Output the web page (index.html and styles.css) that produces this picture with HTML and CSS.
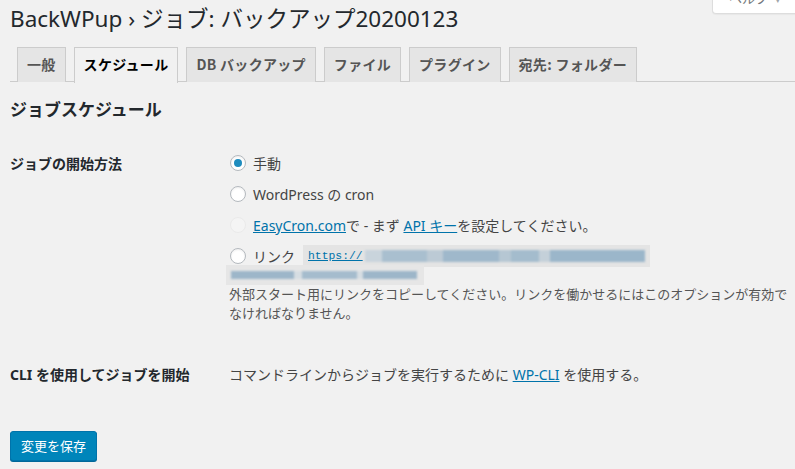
FILE: index.html
```html
<!DOCTYPE html>
<html lang="ja">
<head>
<meta charset="utf-8">
<title>BackWPup ジョブ</title>
<link rel="stylesheet" href="styles.css">
</head>
<body>
<div class="help-tab">ヘルプ <span class="caret">▾</span></div>
<div class="wrap">
  <h1 class="page-title">BackWPup › ジョブ: バックアップ20200123</h1>
  <nav class="nav-tabs">
    <span class="nav-tab">一般</span>
    <span class="nav-tab active">スケジュール</span>
    <span class="nav-tab">DB バックアップ</span>
    <span class="nav-tab">ファイル</span>
    <span class="nav-tab">プラグイン</span>
    <span class="nav-tab">宛先: フォルダー</span>
  </nav>

  <h2 class="section-title">ジョブスケジュール</h2>

  <div class="form-row first">
    <div class="row-label">ジョブの開始方法</div>
    <div class="row-field">
      <label class="option"><span class="radio checked"></span><span class="opt-text">手動</span></label>
      <label class="option"><span class="radio"></span><span class="opt-text">WordPress の cron</span></label>
      <label class="option"><span class="radio disabled"></span><span class="opt-text"><a class="link" href="#">EasyCron.com</a>で - まず <a class="link" href="#">API キー</a>を設定してください。</span></label>
      <label class="option link-option"><span class="radio"></span><span class="opt-text">リンク</span><span class="code code-first"><span class="code-url">https://</span><span class="blur blur-a"></span></span></label>
      <div class="code-line"><span class="code code-second"><span class="blur blur-b"></span></span></div>
      <p class="description">外部スタート用にリンクをコピーしてください。リンクを働かせるにはこのオプションが有効でなければなりません。</p>
    </div>
  </div>

  <div class="form-row cli">
    <div class="row-label">CLI を使用してジョブを開始</div>
    <div class="row-field plain">コマンドラインからジョブを実行するために <a class="link" href="#">WP-CLI</a> を使用する。</div>
  </div>

  <div class="submit">
    <button class="button-primary" type="button">変更を保存</button>
  </div>
</div>
</body>
</html>
```

FILE: styles.css
```css
* { box-sizing: border-box; }
html, body { margin: 0; padding: 0; }
body {
  background: #f1f1f1;
  color: #444;
  font-family: "Noto Sans", "Noto Sans CJK JP", sans-serif;
  font-size: 14px;
  width: 795px;
  height: 469px;
  overflow: hidden;
  position: relative;
}
.help-tab {
  position: absolute;
  left: 712px;
  top: -12px;
  width: 110px;
  height: 26px;
  background: #fff;
  border: 1px solid #ddd;
  border-top: none;
  border-radius: 0 0 4px 4px;
  color: #72777c;
  font-size: 13px;
  line-height: 20px;
  padding-left: 16px;
  box-shadow: 0 1px 1px rgba(0,0,0,.04);
}
.help-tab .caret { font-size: 11px; color: #a0a5aa; margin-left: 4px; }
.wrap { padding: 0 0 0 10px; }
.page-title {
  margin: 0;
  padding: 4px 0 0;
  font-size: 22.5px;
  font-weight: 400;
  line-height: 30px;
  color: #23282d;
  white-space: nowrap;
}
.nav-tabs {
  display: flex;
  margin-top: 13px;
  border-bottom: 1px solid #ccc;
  height: 35px;
}
.nav-tab {
  margin-left: 7px;
  margin-right: 1px;
  height: 35px;
  padding: 0 9px 0 9px;
  border: 1px solid #ccc;
  border-bottom: none;
  background: #e5e5e5;
  color: #555;
  font-family: "Noto Sans CJK JP", "Noto Sans", sans-serif;
  font-size: 14px;
  font-weight: 700;
  letter-spacing: 0.3px;
  line-height: 33px;
  white-space: nowrap;
}
.nav-tab.active {
  background: #f1f1f1;
  color: #000;
  height: 36px;
}
.section-title {
  margin: 17px 0 0;
  font-size: 17px;
  line-height: 22px;
  font-weight: 700;
  color: #23282d;
}
.form-row {
  display: grid;
  grid-template-columns: 219px 1fr;
}
.form-row.first { margin-top: 22px; }
.row-label {
  font-weight: 700;
  color: #23282d;
  font-size: 14px;
  line-height: 21px;
  padding-top: 10px;
}
.row-field { padding-top: 9px; }
.option {
  display: flex;
  align-items: center;
  height: 21px;
  margin: 0 0 10px;
  font-size: 14px;
  color: #444;
  white-space: nowrap;
}
.opt-text { white-space: pre; }
.radio {
  width: 16px;
  height: 16px;
  border-radius: 50%;
  border: 1px solid #b4b9be;
  background: #fff;
  margin-left: 1px;
  margin-right: 7px;
  flex: none;
  box-shadow: inset 0 1px 2px rgba(0,0,0,.07);
  display: flex;
  align-items: center;
  justify-content: center;
}
.radio.checked::after {
  content: "";
  width: 8px;
  height: 8px;
  border-radius: 50%;
  background: #1e8cbe;
}
.radio.disabled {
  background: #f4f4f4;
  border-color: #eaeaea;
  box-shadow: none;
}
.link { color: #0073aa; text-decoration: underline; }
.link-option { margin-bottom: 0; }
.code {
  display: inline-flex;
  align-items: center;
  background: #e4e4e4;
  font-family: "Liberation Mono", "DejaVu Sans Mono", monospace;
  font-size: 11.4px;
  height: 22px;
}
.code-first { margin-left: 8px; width: 347px; padding-left: 5px; }
.code-url { color: #0073aa; text-decoration: underline; }
.blur {
  display: inline-block;
  height: 12px;
  filter: blur(0.8px);
}
.blur-a {
  margin-left: 2px;
  width: 280px;
  background: linear-gradient(90deg,
    #c9d4dc 0 6%, #a9bfcf 6% 22%, #bccad5 22% 28%, #9fb8cb 28% 48%,
    #b6c7d3 48% 52%, #a4bccd 52% 62%, #c4d0d9 62% 66%, #9bb6ca 66% 100%);
}
.code-line { margin: -2px 0 0 -3px; height: 20px; }
.code-second { height: 20px; width: 198px; padding-left: 5px; background: #e6e6e6; }
.blur-b {
  height: 8px;
  width: 186px;
  background: linear-gradient(90deg,
    #9db6c9 0 34%, #d6dde2 34% 38%, #a5bccd 38% 68%, #d6dde2 68% 71%, #9db6c9 71% 100%);
}
.description {
  margin: 1px 0 0;
  width: 566px;
  font-size: 13px;
  line-height: 19px;
  color: #555;
}
.form-row.cli { margin-top: 41px; }
.form-row.cli .row-label { padding-top: 0; }
.row-field.plain {
  padding-top: 0;
  line-height: 21px;
  font-size: 14px;
  color: #444;
  white-space: nowrap;
}
.submit { margin-top: 46px; }
.button-primary {
  height: 30px;
  padding: 0 10px;
  background: #0085ba;
  border: 1px solid #0073aa;
  border-radius: 3px;
  color: #fff;
  font-family: "Noto Sans", "Noto Sans CJK JP", sans-serif;
  font-size: 13px;
  line-height: 28px;
  box-shadow: 0 1px 0 #006799;
  cursor: pointer;
}
```
